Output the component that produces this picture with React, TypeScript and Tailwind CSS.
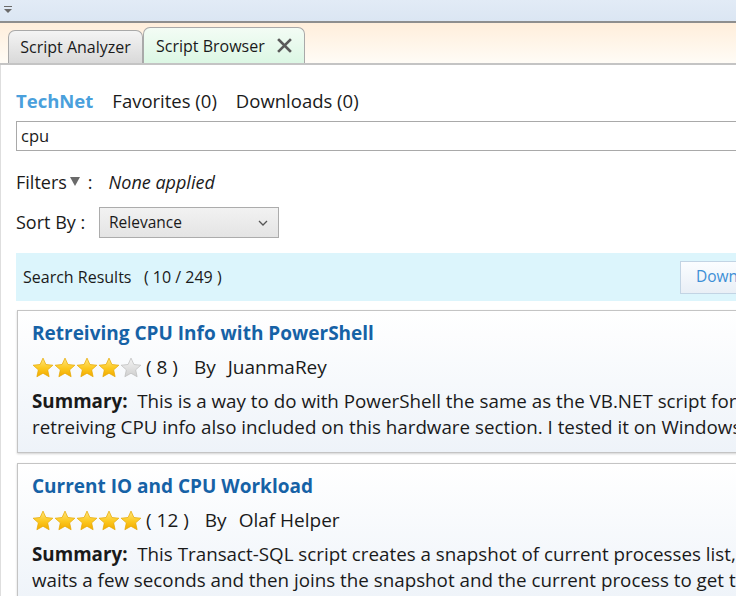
import React from 'react';

const font = { fontFamily: '"Open Sans", "Noto Sans", sans-serif' };

function Star({ filled }: { filled: boolean }) {
  const id = filled ? 'gold' : 'grey';
  return (
    <svg width="22" height="21" viewBox="0 0 24 23" className="shrink-0">
      <defs>
        <linearGradient id="gold" x1="0" y1="0" x2="0" y2="1">
          <stop offset="0" stopColor="#ffe680" />
          <stop offset="0.55" stopColor="#fcc81e" />
          <stop offset="1" stopColor="#f2a900" />
        </linearGradient>
        <linearGradient id="grey" x1="0" y1="0" x2="0" y2="1">
          <stop offset="0" stopColor="#f4f4f4" />
          <stop offset="1" stopColor="#cfcfcf" />
        </linearGradient>
      </defs>
      <path
        d="M12 1.2l3.2 7 7.6.8-5.7 5.1 1.6 7.5L12 17.8l-6.7 3.8 1.6-7.5L1.2 9l7.6-.8z"
        fill={`url(#${id})`}
        stroke={filled ? '#e6a800' : '#bdbdbd'}
        strokeWidth="0.8"
        strokeLinejoin="round"
      />
    </svg>
  );
}

function ResultCard({
  title,
  rating,
  count,
  author,
  lines,
}: {
  title: string;
  rating: number;
  count: number;
  author: string;
  lines: string[];
}) {
  return (
    <div className="w-[760px] border border-[#c4c4c4] bg-gradient-to-b from-white to-[#eef3f9] px-[14px] pt-[8px] pb-[12px] shadow-[0_1px_2px_rgba(0,0,0,0.18)]">
      <div className="text-[19px] font-bold leading-[28px] text-[#1662a6] whitespace-nowrap">{title}</div>
      <div className="mt-[6px] flex h-[28px] items-center text-[19px] text-[#1a1a1a] whitespace-nowrap">
        <div className="flex">
          {[0, 1, 2, 3, 4].map(i => (
            <Star key={i} filled={i < rating} />
          ))}
        </div>
        <span className="ml-[4px]">( {count} )</span>
        <span className="ml-[16px]">By</span>
        <span className="ml-[12px]">{author}</span>
      </div>
      <div className="mt-[7px] text-[18.8px] leading-[26px] text-[#1a1a1a] whitespace-nowrap">
        <div>
          <span className="font-bold">Summary:</span>&nbsp;&nbsp;{lines[0]}
        </div>
        <div>{lines[1]}</div>
      </div>
    </div>
  );
}

export default function App() {
  return (
    <div className="h-[596px] w-[736px] overflow-hidden bg-white" style={font}>
      {/* window top strip */}
      <div className="flex h-[21px] items-start bg-gradient-to-b from-[#e2ebf6] to-[#dbe6f3] pl-[4px] pt-[6px]">
        <svg width="8" height="8" viewBox="0 0 8 8">
          <rect x="0" y="0" width="8" height="1" fill="#6a6a6a" />
          <path d="M0 3h8L4 7z" fill="#6a6a6a" />
        </svg>
      </div>
      <div className="h-[2px] bg-[#8e8e8e]" />

      {/* tab strip */}
      <div className="flex h-[42px] items-end border-b-2 border-[#c4c4c4] bg-gradient-to-b from-[#ffeedb] to-[#fffcf6] pl-[8px]">
        <div className="flex h-[33px] w-[135px] items-center justify-center rounded-t-[7px] border border-b-0 border-[#a9a9a9] bg-gradient-to-b from-[#f4f4f4] to-[#d9d9d9] text-[16px] text-[#1a1a1a]">
          Script Analyzer
        </div>
        <div className="flex h-[36px] w-[162px] items-center rounded-t-[7px] border border-b-0 border-[#a9a9a9] bg-gradient-to-b from-[#f3fcf5] to-[#dcf7e4] pl-[12px] text-[16px] text-[#1a1a1a]">
          Script Browser
          <svg width="15" height="15" viewBox="0 0 15 15" className="ml-[12px]">
            <path d="M2 2l11 11M13 2L2 13" stroke="#5a5a5a" strokeWidth="2.6" strokeLinecap="square" />
          </svg>
        </div>
      </div>

      {/* browser body */}
      <div className="flex flex-col border-l border-[#dedede] pl-[15px]">
        <div className="mt-[23px] flex items-center gap-[19px] whitespace-nowrap text-[18.5px] leading-[26px] text-[#1a1a1a]">
          <span className="font-bold text-[#4aa0dc]">TechNet</span>
          <span>Favorites (0)</span>
          <span>Downloads (0)</span>
        </div>

        <div className="mt-[7px] flex h-[30px] w-[760px] items-center border border-[#a9a9a9] pl-[4px] text-[16.5px] text-[#1a1a1a]">
          cpu
        </div>

        <div className="mt-[18px] flex items-center whitespace-nowrap text-[18px] text-[#1a1a1a]">
          <span>Filters</span>
          <svg width="10" height="10" viewBox="0 0 10 10" className="ml-[3px] mb-[3px]">
            <path d="M0 1h10L5 10z" fill="#6a6a6a" />
          </svg>
          <span className="ml-[8px]">:</span>
          <span className="ml-[16px] italic">None applied</span>
        </div>

        <div className="mt-[11px] flex items-center text-[18px] text-[#1a1a1a]">
          <span className="w-[83px]">Sort By :</span>
          <div className="flex h-[31px] w-[180px] items-center justify-between border border-[#acacac] bg-gradient-to-b from-[#f2f2f2] to-[#e4e4e4] pl-[9px] pr-[10px] text-[15.5px]">
            Relevance
            <svg width="10" height="6" viewBox="0 0 10 6">
              <path d="M1 1l4 4 4-4" stroke="#555" strokeWidth="1.3" fill="none" />
            </svg>
          </div>
        </div>

        <div className="mt-[15px] flex h-[48px] w-[760px] items-center justify-between bg-[#dcf5fc] pl-[7px] text-[16px] text-[#1a1a1a]">
          <span className="whitespace-nowrap">Search Results&nbsp;&nbsp;&nbsp;( 10 / 249 )</span>
          <div className="mr-[-4px] flex h-[33px] w-[100px] items-center border border-[#c2d4e4] bg-gradient-to-b from-[#fbfdff] to-[#e9eff6] pl-[15px] text-[15.5px] text-[#3d8fd6]">
            Download
          </div>
        </div>

        <div className="mt-[9px] flex flex-col gap-[10px] pl-[1px]">
          <ResultCard
            title="Retreiving CPU Info with PowerShell"
            rating={4}
            count={8}
            author="JuanmaRey"
            lines={[
              'This is a way to do with PowerShell the same as the VB.NET script for',
              'retreiving CPU info also included on this hardware section. I tested it on Windows',
            ]}
          />
          <ResultCard
            title="Current IO and CPU Workload"
            rating={5}
            count={12}
            author="Olaf Helper"
            lines={[
              'This Transact-SQL script creates a snapshot of current processes list,',
              'waits a few seconds and then joins the snapshot and the current process to get the',
            ]}
          />
        </div>
      </div>
    </div>
  );
}
